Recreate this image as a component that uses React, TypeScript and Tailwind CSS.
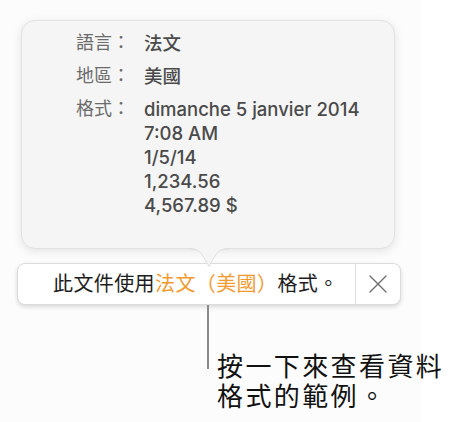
import { X } from 'lucide-react';

const CJK = "font-['Inter','Noto_Sans_CJK_TC',sans-serif]";

const ROWS: { label: string; values: string[] }[] = [
  { label: '語言：', values: ['法文'] },
  { label: '地區：', values: ['美國'] },
  {
    label: '格式：',
    values: ['dimanche 5 janvier 2014', '7:08 AM', '1/5/14', '1,234.56', '4,567.89 $'],
  },
];

export default function App() {
  return (
    <div className={`w-[449px] h-[422px] bg-white overflow-hidden ${CJK}`}>
      <div className="w-[422px] h-full bg-[#fcfcfc] pt-[20px]">
        {/* popover */}
        <div className="relative ml-[21px] w-[374px] h-[229px] rounded-[14px] bg-[#f5f5f5] border border-[#e2e2e2] shadow-[0_2px_10px_rgba(0,0,0,0.10)]">
          <div className="pt-[10px] pl-[54px] flex flex-col gap-[9px]">
            {ROWS.map((r) => (
              <div key={r.label} className="flex text-[18.5px] leading-[24px]">
                <div className="w-[68px] text-[#6b6b6b] text-[18px]">{r.label}</div>
                <div className="flex flex-col text-[#4a4a4a] font-medium">
                  {r.values.map((v) => (
                    <span key={v}>{v}</span>
                  ))}
                </div>
              </div>
            ))}
          </div>
          <svg
            className="absolute left-[167px] top-[227px]"
            width="40"
            height="20"
            viewBox="0 0 40 20"
          >
            <path d="M0 0 C8 0 11 2 14 7 L20 18 L26 7 C29 2 32 0 40 0 Z" fill="#f5f5f5" />
            <path d="M0 1 C8 1 11 3 14 8 L20 18.5 L26 8 C29 3 32 1 40 1" fill="none" stroke="#e0e0e0" strokeWidth="1" />
          </svg>
        </div>

        {/* message bar */}
        <div className="ml-[17px] mt-[14px] w-[384px] h-[42px] flex rounded-[8px] bg-white border border-[#dcdcdc] shadow-[0_2px_4px_rgba(0,0,0,0.14)]">
          <div className="flex-1 flex items-center pl-[35px] text-[20px] tracking-[0.4px] text-[#1e1e1e] whitespace-nowrap">
            此文件使用<span className="text-[#f39a2e]">法文（美國）</span>格式。
          </div>
          <div className="w-[45px] shrink-0 border-l border-[#e0e0e0] flex items-center justify-center">
            <X className="w-[32px] h-[32px] text-[#707070]" strokeWidth={1.05} />
          </div>
        </div>

        {/* callout */}
        <div className="flex items-start">
          <div className="shrink-0 ml-[207px] w-[2px] h-[64px] bg-[#8a8a8a]" />
          <div className="ml-[8px] mt-[47px] text-[26px] tracking-[2.4px] leading-[30px] text-[#111] whitespace-nowrap">
            <div>按一下來查看資料</div>
            <div>格式的範例。</div>
          </div>
        </div>
      </div>
    </div>
  );
}
